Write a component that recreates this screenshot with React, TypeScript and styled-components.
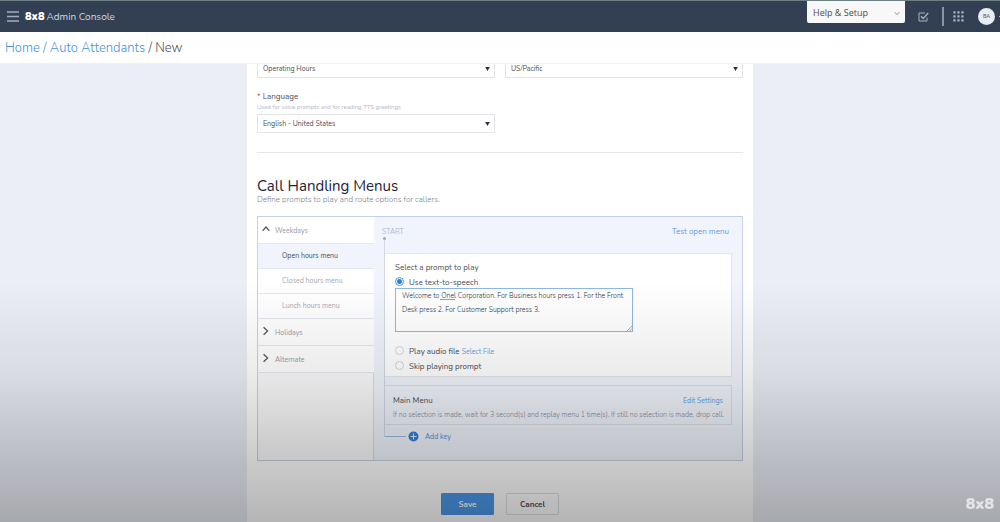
import React, { useState } from "react";
import styled, { createGlobalStyle, css } from "styled-components";

const GlobalStyle = createGlobalStyle`
  *, *::before, *::after { box-sizing: border-box; }
  body {
    margin: 0;
    background: #ebeef6;
    color: #4a4d57;
    font-family: Nunito, Lato, "Open Sans", sans-serif;
    font-size: 8px;
    line-height: 10px;
  }
  button, input, select, textarea { font: inherit; color: inherit; }
  a { color: #5f9fe0; text-decoration: none; }
`;

const Page = styled.div`
  display: flex;
  flex-direction: column;
  height: 100vh;
  overflow: hidden;
`;

const TopBar = styled.header`
  flex: none;
  display: flex;
  align-items: center;
  height: 32px;
  padding: 0 0 0 7px;
  background: #333f52;
  border-top: 1px solid #6d8084;
`;

const IconButton = styled.button`
  display: flex;
  padding: 0;
  border: 0;
  background: none;
  color: #aab4c6;
`;

const Brand = styled.span`
  margin-left: 6px;
  color: #fff;
  font-size: 11px;
  font-weight: 900;
  line-height: 12px;
`;

const ProductName = styled.span`
  margin-left: 2px;
  color: #d3d9e4;
  font-size: 10px;
  line-height: 12px;
`;

const Tools = styled.div`
  display: flex;
  align-items: center;
  align-self: stretch;
  margin-left: auto;
`;

const HelpField = styled.div`
  position: relative;
  align-self: flex-start;
  display: flex;
  width: 98px;
  height: 22px;
  margin-right: 13px;
  background: #f8f8f8;
  border-radius: 0 0 2px 2px;
  svg { position: absolute; right: 5px; top: 10px; pointer-events: none; }
`;

const HelpSelect = styled.select`
  width: 100%;
  padding: 2px 6px 0;
  border: 0;
  background: none;
  appearance: none;
  color: #4c4c4c;
  font-family: "Open Sans", sans-serif;
  font-size: 9px;
`;

const BarDivider = styled.span`
  width: 2px;
  height: 19px;
  margin: 0 9px 0 13px;
  background: #8796aa;
`;

const Avatar = styled.button`
  width: 17px;
  height: 17px;
  margin: 0 4px 0 14px;
  padding: 0;
  border: 0;
  border-radius: 50%;
  background: #e9ecf3;
  color: #666b78;
  font-size: 5px;
  font-weight: 700;
  line-height: 17px;
`;

const AvatarCaret = styled.span`
  width: 1px;
  height: 1px;
  background: #aab4c6;
`;

const Breadcrumb = styled.nav`
  flex: none;
  height: 32px;
  padding: 0 5px;
  background: #fff;
  border-bottom: 1px solid #f1f2f6;
  color: #4b4e56;
  font-size: 13px;
  font-weight: 300;
  line-height: 32px;
  a { color: #4391dc; }
`;

const Content = styled.main`
  flex: 1;
  min-height: 0;
  overflow: hidden;
`;

const Sheet = styled.form`
  width: 100%;
  max-width: 506px;
  min-height: 100%;
  margin: -5px auto 0;
  padding: 0 10px 12px;
  background: #fff;
`;

const FieldRow = styled.div`
  display: grid;
  grid-template-columns: 1fr 1fr;
  gap: 10px;
`;

const Picker = styled.div`
  position: relative;
  display: flex;
  height: 19px;
  svg { position: absolute; right: 5px; top: 8px; pointer-events: none; }
`;

const PickerSelect = styled.select`
  width: 100%;
  padding: 0 5px;
  border: 1px solid #e3e4e8;
  border-radius: 0;
  background: #fff;
  appearance: none;
  font-size: 7px;
`;

const LanguageField = styled.div`
  display: flex;
  flex-direction: column;
  margin-top: 14px;
`;

const Required = styled.span`
  color: #e0504f;
`;

const Hint = styled.span`
  margin-bottom: 2px;
  color: #b3b6cb;
  font-size: 6px;
`;

const Rule = styled.hr`
  height: 1px;
  margin: 19px 0 24px;
  border: 0;
  background: #e6e7ea;
`;

const Title = styled.h1`
  margin: 0;
  color: #1d2237;
  font-size: 15px;
  font-weight: 400;
  line-height: 18px;
`;

const Subtitle = styled.p`
  margin: 0 0 11px;
  color: #7d808e;
  font-weight: 300;
`;

const Panel = styled.section`
  display: flex;
  min-height: 245px;
  background: #f1f4fc;
  border: 1px solid #c6d1e5;
`;

const SideNav = styled.nav`
  flex: none;
  width: 116px;
  background: #fbfbfc;
  border-right: 1px solid #d9ddea;
`;

const GroupButton = styled.button`
  display: flex;
  align-items: center;
  gap: 5px;
  width: 116px;
  height: 27px;
  padding: 2px 4px 0;
  border: 0;
  border-bottom: 1px solid #e6e8ef;
  background: #fff;
  color: #9a9ca6;
  font-size: 7px;
  svg { margin-bottom: 4px; color: #4f5262; }
`;

const MenuButton = styled.button<{ $active?: boolean }>`
  display: block;
  width: 116px;
  height: 25px;
  padding: 0 0 0 24px;
  border: 0;
  border-bottom: 1px solid #e6e8ef;
  background: ${(p) => (p.$active ? "#f1f4fc" : "#fff")};
  color: ${(p) => (p.$active ? "#4a4d57" : "#a6a8b1")};
  font-size: 7px;
  text-align: left;
`;

const Flow = styled.div`
  flex: 1;
  min-width: 0;
  padding: 0 10px;
`;

const FlowHead = styled.div`
  display: flex;
  justify-content: space-between;
  height: 21px;
  padding-top: 10px;
`;

const Start = styled.span`
  margin-left: -2px;
  color: #b1b5c8;
  font-size: 7px;
`;

const TestLink = styled.a`
  margin-right: 3px;
`;

const Track = styled.div`
  position: relative;
  padding-top: 15px;
  border-left: 1px solid #d3d8e6;
  &::before {
    content: "";
    position: absolute;
    left: -2px;
    top: -1px;
    width: 3px;
    height: 3px;
    border-radius: 50%;
    background: #a3a8bf;
  }
`;

const card = css`
  border: 1px solid #e4e7ee;
  border-left: 0;
`;

const PromptCard = styled.fieldset`
  ${card}
  min-width: 0;
  height: 124px;
  margin: 0;
  padding: 9px 10px 0;
  background: #fff;
`;

const PromptTitle = styled.div``;

const Option = styled.div`
  display: flex;
  align-items: center;
  height: 15px;
`;

const SpeechOption = styled(Option)`
  align-items: flex-end;
`;

const Radio = styled.input`
  flex: none;
  width: 9px;
  height: 9px;
  margin: 0 5px 2px 0;
  border: 1px solid #d5d6da;
  border-radius: 50%;
  background: #fff;
  appearance: none;
  &:checked {
    border-color: #4a94e4;
    background: radial-gradient(circle, #2c7fdd 2px, #fff 3px);
  }
`;

const FileLink = styled.a`
  margin-left: 2px;
  font-size: 7px;
`;

const SpeechBox = styled.div`
  position: relative;
  display: flex;
  width: 238px;
  margin-bottom: 12px;
`;

const SpeechText = styled.textarea`
  width: 100%;
  height: 44px;
  padding: 0 0 0 6px;
  border: 1px solid #8db8e4;
  border-radius: 0;
  outline: 0;
  background: #fff;
  color: #30333c;
  font-size: 7px;
  font-weight: 300;
  line-height: 14px;
  overflow: hidden;
  resize: none;
`;

const SpellingMark = styled.span`
  position: absolute;
  left: 45px;
  top: 11px;
  width: 15px;
  height: 1px;
  background: #ee7b78;
`;

const Grip = styled.svg`
  position: absolute;
  right: 1px;
  bottom: 1px;
`;

const MenuCard = styled.section`
  ${card}
  height: 40px;
  margin-top: 8px;
  padding: 10px 8px 0;
  border-color: #dcdfe8;
`;

const MenuHead = styled.div`
  display: flex;
  justify-content: space-between;
  margin-bottom: 4px;
  a { font-size: 7px; }
`;

const MenuNote = styled.p`
  margin: 0;
  color: #858894;
  font-size: 7px;
  font-weight: 300;
  white-space: nowrap;
`;

const KeyStem = styled.div`
  height: 12px;
  width: 21px;
  border-bottom: 1px solid #9dbbe2;
`;

const AddKeyRow = styled.div`
  display: flex;
  margin: -6px 0 0 24px;
`;

const AddKey = styled.button`
  display: flex;
  align-items: center;
  gap: 6px;
  padding: 0;
  border: 0;
  background: none;
  color: #4b91dc;
  font-size: 7px;
`;

const Actions = styled.div`
  display: flex;
  justify-content: center;
  gap: 12px;
  margin-top: 32px;
`;

const ActionButton = styled.button<{ $primary?: boolean }>`
  width: 53px;
  height: 22px;
  padding: 1px 0 0;
  border: 1px solid ${(p) => (p.$primary ? "#4c98e8" : "#dfdfe1")};
  border-radius: 1px;
  background: ${(p) => (p.$primary ? "#4c98e8" : "#fff")};
  color: ${(p) => (p.$primary ? "#fff" : "#4a4d57")};
  font-weight: 700;
`;

const Shade = styled.div`
  position: fixed;
  inset: 0;
  pointer-events: none;
  background: linear-gradient(
    rgba(0, 0, 0, 0) 54%,
    rgba(0, 0, 0, 0.08) 72%,
    rgba(0, 0, 0, 0.21) 89%,
    rgba(0, 0, 0, 0.29) 100%
  );
`;

const Watermark = styled.span`
  position: fixed;
  right: 6px;
  bottom: 9px;
  color: #e3e4e6;
  font-size: 16px;
  font-weight: 900;
  line-height: 18px;
`;

const Caret = () => (
  <svg width="5" height="4" viewBox="0 0 5 4" aria-hidden="true">
    <path d="M0.2 0h4.6L2.5 4z" fill="#2d2f36" />
  </svg>
);

const Chevron = ({ up }: { up?: boolean }) => (
  <svg width="8" height="10" viewBox="0 0 8 10" fill="none" stroke="currentColor" strokeWidth="1.2" aria-hidden="true">
    <path d={up ? "M0.6 6.8L4 3l3.4 3.8" : "M1.6 1.2L5.6 5l-4 3.8"} />
  </svg>
);

const Pick = ({ label, value }: { label: string; value: string }) => (
  <Picker>
    <PickerSelect aria-label={label} defaultValue={value}>
      <option>{value}</option>
    </PickerSelect>
    <Caret />
  </Picker>
);

export default function App() {
  const [prompt, setPrompt] = useState("tts");
  const [menu, setMenu] = useState("Open hours menu");
  const radio = (id: string) => (
    <Radio type="radio" name="prompt" id={id} checked={prompt === id} onChange={() => setPrompt(id)} />
  );

  return (
    <Page>
      <GlobalStyle />
      <TopBar>
        <IconButton aria-label="Open navigation">
          <svg width="12" height="11" viewBox="0 0 12 11" stroke="#a2adc2" aria-hidden="true">
            <path d="M0 1h12M0 5.5h12M0 10h12" strokeWidth="1.3" />
          </svg>
        </IconButton>
        <Brand>8x8</Brand>
        <ProductName>Admin Console</ProductName>
        <Tools>
          <HelpField>
            <HelpSelect aria-label="Help and setup" defaultValue="Help & Setup">
              <option>Help &amp; Setup</option>
            </HelpSelect>
            <svg width="6" height="5" viewBox="0 0 6 5" fill="none" stroke="#999" aria-hidden="true">
              <path d="M0.5 1L3 3.8 5.5 1" />
            </svg>
          </HelpField>
          <IconButton aria-label="Tasks">
            <svg width="11" height="10" viewBox="0 0 11 10" fill="none" stroke="#a9b3c2" aria-hidden="true">
              <path d="M7 1H1v8h8V5.5" />
              <path d="M3 4.2l2.2 2.3L10.2 1" strokeWidth="1.3" />
            </svg>
          </IconButton>
          <BarDivider />
          <IconButton aria-label="Applications">
            <svg width="11" height="11" viewBox="0 0 11 11" fill="#a9b3c6" aria-hidden="true">
              {[0, 4, 8].map((y) =>
                [0, 4, 8].map((x) => <rect key={`${x}-${y}`} x={x + 0.3} y={y + 0.3} width="2.3" height="2.3" rx="0.5" />)
              )}
            </svg>
          </IconButton>
          <Avatar>BA</Avatar>
          <AvatarCaret />
        </Tools>
      </TopBar>
      <Breadcrumb aria-label="Breadcrumb">
        <a href="#home">Home</a> <a href="#attendants">/ Auto Attendants</a> / New
      </Breadcrumb>
      <Content>
        <Sheet onSubmit={(e) => e.preventDefault()}>
          <FieldRow>
            <Pick label="Hours" value="Operating Hours" />
            <Pick label="Time zone" value="US/Pacific" />
          </FieldRow>
          <FieldRow>
            <LanguageField>
              <span>
                <Required>*</Required> Language
              </span>
              <Hint>Used for voice prompts and for reading TTS greetings</Hint>
              <Pick label="Language" value="English - United States" />
            </LanguageField>
          </FieldRow>
          <Rule />
          <Title>Call Handling Menus</Title>
          <Subtitle>Define prompts to play and route options for callers.</Subtitle>
          <Panel>
            <SideNav aria-label="Menus">
              <GroupButton type="button">
                <Chevron up />
                Weekdays
              </GroupButton>
              {["Open hours menu", "Closed hours menu", "Lunch hours menu"].map((name) => (
                <MenuButton key={name} type="button" $active={menu === name} onClick={() => setMenu(name)}>
                  {name}
                </MenuButton>
              ))}
              {["Holidays", "Alternate"].map((name) => (
                <GroupButton key={name} type="button">
                  <Chevron />
                  {name}
                </GroupButton>
              ))}
            </SideNav>
            <Flow>
              <FlowHead>
                <Start>START</Start>
                <TestLink href="#test">Test open menu</TestLink>
              </FlowHead>
              <Track>
                <PromptCard aria-label="Prompt">
                  <PromptTitle>Select a prompt to play</PromptTitle>
                  <SpeechOption>
                    {radio("tts")}
                    <label htmlFor="tts">Use text-to-speech</label>
                  </SpeechOption>
                  <SpeechBox>
                    <SpeechText
                      aria-label="Text to speech"
                      spellCheck={false}
                      defaultValue="Welcome to Onel Corporation. For Business hours press 1. For the Front Desk press 2. For Customer Support press 3."
                    />
                    <SpellingMark />
                    <Grip width="5" height="5" viewBox="0 0 5 5" stroke="#8b8b8b" strokeWidth="0.7" aria-hidden="true">
                      <path d="M0 5L5 0M2.5 5L5 2.5" />
                    </Grip>
                  </SpeechBox>
                  <Option>
                    {radio("audio")}
                    <label htmlFor="audio">Play audio file</label>
                    <FileLink href="#file">Select File</FileLink>
                  </Option>
                  <Option>
                    {radio("skip")}
                    <label htmlFor="skip">Skip playing prompt</label>
                  </Option>
                </PromptCard>
                <MenuCard>
                  <MenuHead>
                    <span>Main Menu</span>
                    <a href="#settings">Edit Settings</a>
                  </MenuHead>
                  <MenuNote>
                    If no selection is made, wait for 3 second(s) and replay menu 1 time(s). If still no selection is made, drop call.
                  </MenuNote>
                </MenuCard>
                <KeyStem />
              </Track>
              <AddKeyRow>
                <AddKey type="button">
                  <svg width="11" height="11" viewBox="0 0 11 11" aria-hidden="true">
                    <circle cx="5.5" cy="5.5" r="5" fill="#2f83dc" />
                    <path d="M5.5 2.5v6M2.5 5.5h6" stroke="#e3ebf5" />
                  </svg>
                  Add key
                </AddKey>
              </AddKeyRow>
            </Flow>
          </Panel>
          <Actions>
            <ActionButton type="submit" $primary>
              Save
            </ActionButton>
            <ActionButton type="button">Cancel</ActionButton>
          </Actions>
        </Sheet>
      </Content>
      <Shade />
      <Watermark>8x8</Watermark>
    </Page>
  );
}
